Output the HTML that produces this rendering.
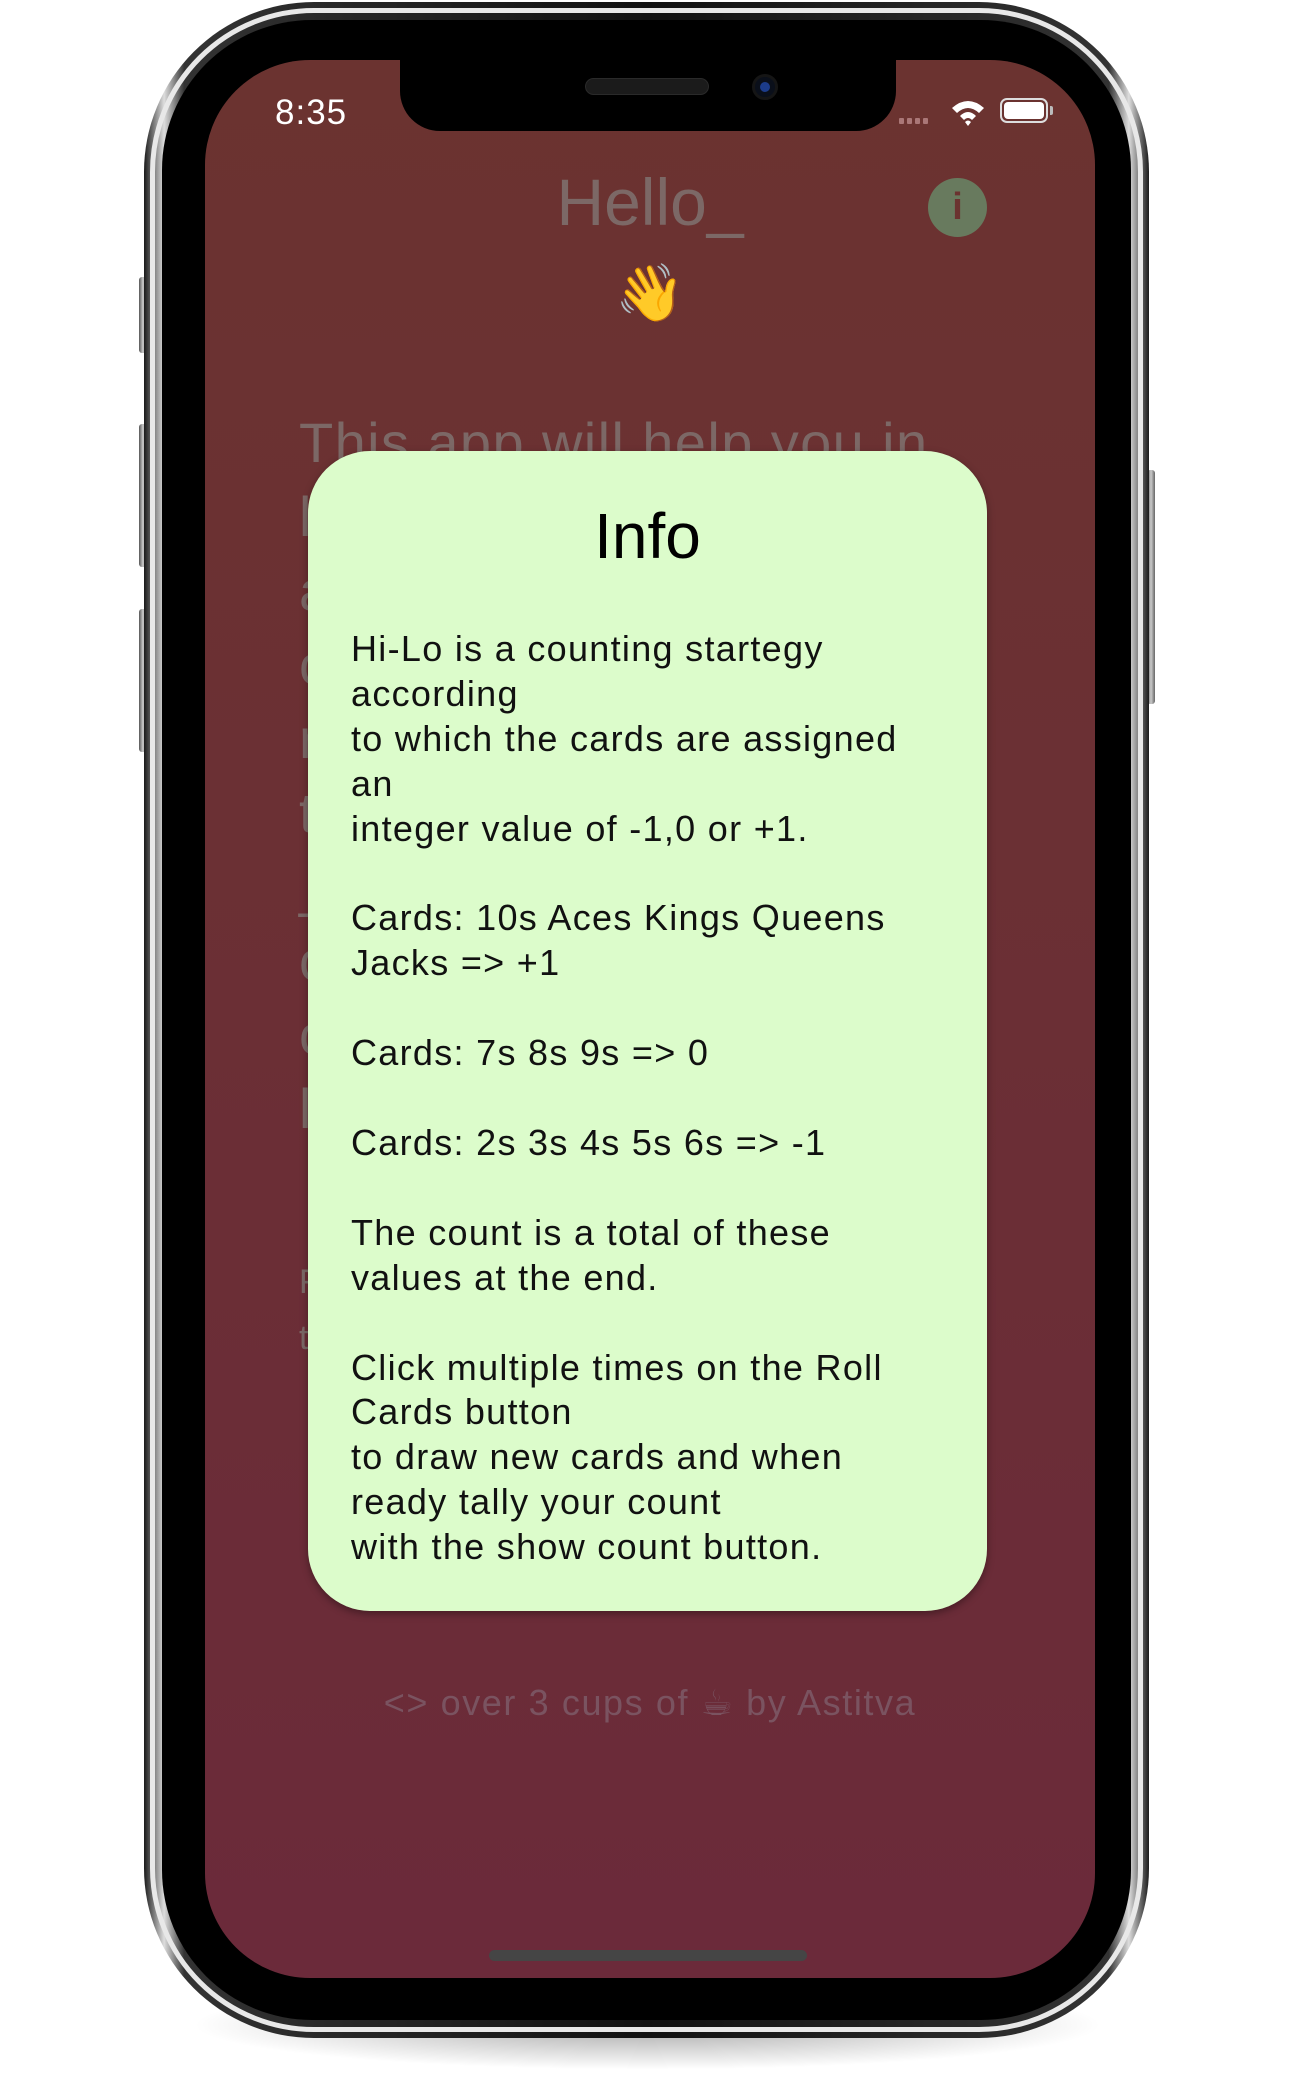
<!DOCTYPE html>
<html><head><meta charset="utf-8"><style>
*{margin:0;padding:0;box-sizing:border-box}
body{width:1296px;height:2095px;background:#fff;position:relative;overflow:hidden;font-family:"Liberation Sans","DejaVu Sans",sans-serif}
.shadow{position:absolute;left:190px;top:1980px;width:915px;height:90px;border-radius:50%;background:radial-gradient(ellipse at center,rgba(0,0,0,.35),rgba(0,0,0,0) 70%)}
.btn{position:absolute;background:linear-gradient(90deg,#555,#ccc,#666);border-radius:3px}
.outer{position:absolute;left:144px;top:2px;width:1005px;height:2036px;border-radius:170px;background:linear-gradient(90deg,#1a1a1a,#ddd 2%,#333 4%,#111 50%,#333 96%,#ddd 98%,#1a1a1a);padding:8px}
.ring{position:absolute;inset:6px;border-radius:164px;border:5px solid #e8e8e8;}
.black{position:absolute;left:18px;top:18px;right:18px;bottom:18px;border-radius:150px;background:#000}
.screen{position:absolute;left:205px;top:60px;width:890px;height:1918px;border-radius:105px;background:linear-gradient(180deg,#6b3330 0%,#6b2f35 50%,#6b2a3a 100%);overflow:hidden}
.notch{position:absolute;left:195px;top:0;width:496px;height:71px;background:#000;border-radius:0 0 40px 40px}
.t{position:absolute;white-space:nowrap}
.dialog{position:absolute;left:308px;top:451px;width:679px;height:1160px;background:#dcfccb;border-radius:62px;box-shadow:0 3px 8px rgba(0,0,0,.35)}
.body{position:absolute;left:43px;top:176px;font-size:36px;letter-spacing:1.3px;line-height:44.9px;color:#111;white-space:pre}
</style></head><body>
<div class="shadow"></div>
<div class="btn" style="left:139px;top:277px;width:8px;height:76px"></div>
<div class="btn" style="left:139px;top:424px;width:8px;height:143px"></div>
<div class="btn" style="left:139px;top:609px;width:8px;height:143px"></div>
<div class="btn" style="left:1147px;top:470px;width:8px;height:234px"></div>
<div class="outer"><div class="ring"></div><div class="black"></div></div>
<div class="screen">
  <div class="notch">
    <div style="position:absolute;left:185px;top:18px;width:124px;height:17px;border-radius:9px;background:#1b1b1b;border:1px solid #2a2a2a"></div>
    <div style="position:absolute;left:352px;top:14px;width:26px;height:26px;border-radius:50%;background:#0a0f1a;border:3px solid #151515"><div style="position:absolute;left:5px;top:5px;width:10px;height:10px;border-radius:50%;background:#1c3c8a"></div></div>
  </div>
  <div class="t" style="left:70px;top:33px;font-size:35px;letter-spacing:1px;color:#fff">8:35</div>
  <div style="position:absolute;left:694px;top:58px;display:flex;gap:3px">
    <i style="width:5px;height:6px;background:#a77;display:block;border-radius:1px"></i><i style="width:5px;height:6px;background:#a77;display:block;border-radius:1px"></i><i style="width:5px;height:6px;background:#a77;display:block;border-radius:1px"></i><i style="width:5px;height:6px;background:#a77;display:block;border-radius:1px"></i>
  </div>
  <svg style="position:absolute;left:745px;top:38px" width="36" height="28" viewBox="0 0 36 28"><path d="M2 10 Q18 -4 34 10 L29 15 Q18 5 7 15Z" fill="#fff"/><path d="M10 18 Q18 10 26 18 L22 22 Q18 18 14 22Z" fill="#fff"/><path d="M15 24 L18 28 L21 24 Q18 21 15 24Z" fill="#fff"/></svg>
  <div style="position:absolute;left:795px;top:38px;width:48px;height:25px;border:2px solid #ddd;border-radius:7px;padding:2px"><div style="width:100%;height:100%;background:#fff;border-radius:4px"></div></div>
  <div style="position:absolute;left:845px;top:46px;width:3px;height:9px;background:#bbb;border-radius:0 2px 2px 0"></div>
  <div class="t" style="left:0;width:890px;text-align:center;top:104px;font-size:66px;color:#7c6866">Hello_</div>
  <div style="position:absolute;left:723px;top:118px;width:59px;height:59px;border-radius:50%;background:#687a5e;color:#6b3330;font-weight:bold;font-size:38px;text-align:center;line-height:59px">i</div>
  <div class="t" style="left:0;width:890px;text-align:center;top:200px;font-size:56px">👋</div>
  <div class="t" style="left:94px;top:346px;font-size:56px;letter-spacing:1.4px;color:#7c6866;line-height:74px;white-space:pre">This app will help you in
l
a
c
r
t
_
c
c
l
</div>
  <div class="t" style="left:94px;top:1194px;font-size:34px;color:#7c6866;line-height:56px;white-space:pre">F
t</div>
  <div class="t" style="left:0;width:890px;text-align:center;top:1622px;font-size:36px;letter-spacing:1.6px;color:#7a5360">&lt;&gt; over 3 cups of ☕ by Astitva</div>
  <div style="position:absolute;left:284px;top:1890px;width:318px;height:11px;border-radius:6px;background:#454545"></div>
</div>
<div class="dialog">
  <div class="t" style="left:0;width:679px;text-align:center;top:48px;font-size:64px;color:#000">Info</div>
  <div class="body">Hi-Lo is a counting startegy
according
to which the cards are assigned
an
integer value of -1,0 or +1.

Cards: 10s Aces Kings Queens
Jacks =&gt; +1

Cards: 7s 8s 9s =&gt; 0

Cards: 2s 3s 4s 5s 6s =&gt; -1

The count is a total of these
values at the end.

Click multiple times on the Roll
Cards button
to draw new cards and when
ready tally your count
with the show count button.</div>
</div>
</body></html>
